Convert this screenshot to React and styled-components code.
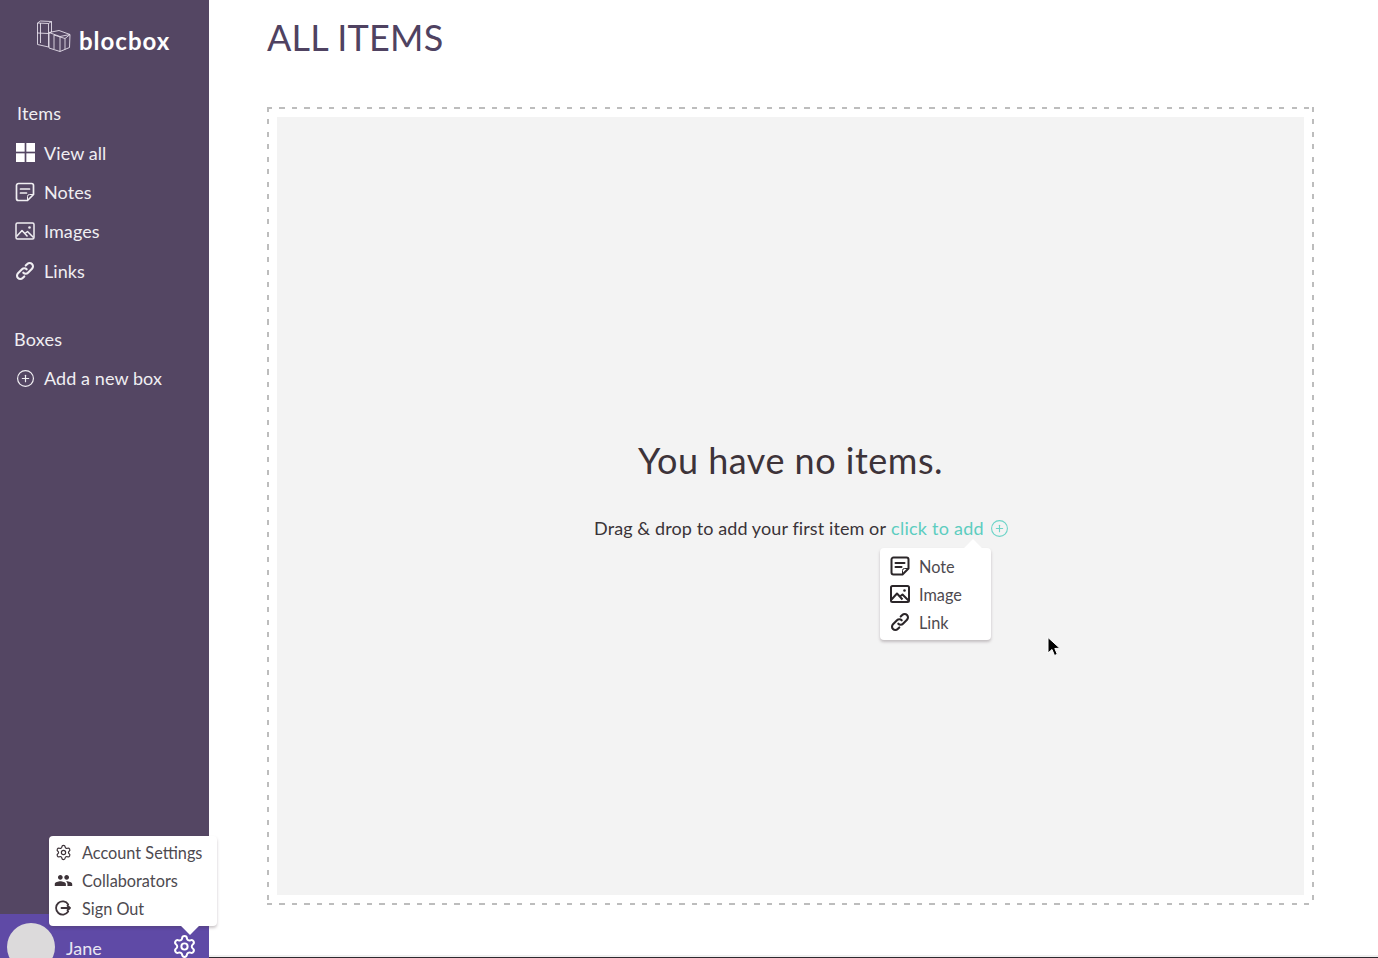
import React from "react";
import styled, { createGlobalStyle } from "styled-components";
import { Settings, CirclePlus } from "lucide-react";
import { MdPeople } from "react-icons/md";

const GlobalStyle = createGlobalStyle`
  html, body {
    margin: 0;
    padding: 0;
    height: 958px;
    overflow: hidden;
    background: #fff;
    font-family: "Lato", "Open Sans", sans-serif;
  }
  * { box-sizing: border-box; }
`;

const Page = styled.div`
  position: relative;
  display: flex;
  width: 1378px;
  height: 958px;
  overflow: hidden;
`;

const Sidebar = styled.aside`
  position: relative;
  flex: 0 0 209px;
  display: flex;
  flex-direction: column;
  background: #544663;
  color: #f0eef2;
`;

const Brand = styled.div`
  display: flex;
  align-items: flex-end;
  gap: 7px;
  height: 53px;
  padding: 0 0 0 36px;
`;

const BrandName = styled.span`
  font-size: 24px;
  font-weight: 700;
  line-height: 28px;
  color: #fff;
  letter-spacing: 1px;
  margin-bottom: -2px;
`;

const Section = styled.div`
  display: flex;
  flex-direction: column;
  margin-top: ${(p) => p.$top}px;
`;

const SectionTitle = styled.div`
  height: 24px;
  margin-bottom: 8px;
  padding-left: ${(p) => p.$indent}px;
  font-size: 18px;
  line-height: 24px;
  letter-spacing: 0.2px;
`;

const NavRow = styled.div`
  display: flex;
  align-items: center;
  gap: 9px;
  height: 39.4px;
  padding-left: 15px;
  font-size: 18px;
  letter-spacing: 0.08px;
`;

const IconSlot = styled.span`
  display: flex;
  align-items: center;
  justify-content: center;
  width: 20px;
  height: 20px;
  color: ${(p) => p.$color || "inherit"};
`;

const UserBar = styled.div`
  position: absolute;
  left: 0;
  right: 0;
  bottom: 0;
  height: 44px;
  display: flex;
  align-items: flex-start;
  background: #5f4aa6;
  overflow: hidden;
`;

const Avatar = styled.div`
  flex: 0 0 48px;
  height: 48px;
  margin: 9px 0 0 7px;
  border-radius: 50%;
  background: #dcdadb;
`;

const UserName = styled.span`
  margin: 23px 0 0 11px;
  font-size: 18px;
  line-height: 22px;
  color: #e9e6f2;
`;

const GearWrap = styled.span`
  margin: 20px 0 0 auto;
  padding-right: 12px;
  color: #fff;
  display: flex;
`;

const Popover = styled.div`
  position: absolute;
  z-index: 3;
  display: flex;
  flex-direction: column;
  justify-content: center;
  left: ${(p) => p.$left}px;
  top: ${(p) => p.$top}px;
  width: ${(p) => p.$width}px;
  height: ${(p) => p.$height}px;
  padding-bottom: ${(p) => (p.$arrowUp ? 0 : 2)}px;
  background: #fff;
  border-radius: 4px;
  box-shadow: 0 2px 3px rgba(70, 50, 60, 0.28);
  &::after {
    content: "";
    position: absolute;
    left: ${(p) => p.$arrow}px;
    width: 14px;
    height: 14px;
    background: #fff;
    transform: rotate(45deg);
    ${(p) => (p.$arrowUp ? "top: -6px;" : "bottom: -6px;")}
  }
`;

const PopRow = styled.div`
  display: flex;
  align-items: center;
  height: 28px;
  gap: ${(p) => p.$gap}px;
  padding-left: ${(p) => p.$pad}px;
  font-size: 16.3px;
  color: #4e4a50;
`;

const Main = styled.main`
  flex: 1;
  display: flex;
  flex-direction: column;
  padding: 0 65px 0 58px;
  border-bottom: 1px solid #2f2a30;
  box-shadow: inset 0 -2px 0 #f0f0f0;
`;

const Title = styled.h1`
  margin: 0;
  height: 107px;
  padding-top: 14px;
  font-size: 36px;
  line-height: 46px;
  font-weight: 400;
  letter-spacing: 0.2px;
  color: #4f4261;
`;

const dash = "#bdbdbd 0 5px, transparent 5px 12.5px";

const DropZone = styled.div`
  display: flex;
  width: 1047px;
  height: 798px;
  padding: 10px;
  background:
    repeating-linear-gradient(90deg, ${dash}) top / 100% 2px no-repeat,
    repeating-linear-gradient(90deg, ${dash}) bottom / 100% 2px no-repeat,
    repeating-linear-gradient(180deg, ${dash}) left / 2px 100% no-repeat,
    repeating-linear-gradient(180deg, ${dash}) right / 2px 100% no-repeat;
`;

const DropInner = styled.div`
  flex: 1;
  display: flex;
  flex-direction: column;
  align-items: center;
  padding-top: 320px;
  background: #f3f3f3;
`;

const Empty = styled.div`
  font-size: 36px;
  line-height: 46px;
  letter-spacing: 0.5px;
  color: #3d3339;
`;

const Hint = styled.div`
  display: flex;
  align-items: center;
  margin-top: 33px;
  padding-left: 22px;
  font-size: 18px;
  line-height: 24px;
  letter-spacing: 0.1px;
  color: #3a3338;
`;

const AddLink = styled.span`
  margin-left: 5px;
  color: #5dcdc0;
  letter-spacing: 0.25px;
`;

const AddIcon = styled.span`
  display: flex;
  margin-left: 6px;
  color: #6ed4c8;
`;

const Cursor = styled.svg`
  position: absolute;
  left: 1046px;
  top: 636px;
  z-index: 4;
`;

const NoteIcon = ({ size = 20, weight = 1.7 }) => (
  <svg width={size} height={size} viewBox="0 0 20 20" fill="none" stroke="currentColor" strokeWidth={weight} strokeLinejoin="round" strokeLinecap="round">
    <path d="M3.500 1.500h13a2 2 0 0 1 2 2v9l-6 6h-9a2 2 0 0 1-2-2v-13a2 2 0 0 1 2-2z" />
    <path d="M5.500 7h9M5.500 11h6" />
    <path d="M12.500 18.500v-4a2 2 0 0 1 2-2h4" strokeWidth="1" />
  </svg>
);

const ImageIcon = ({ size = 20, weight = 1.5 }) => (
  <svg width={size} height={size} viewBox="0 0 20 20" fill="none" stroke="currentColor" strokeWidth={weight} strokeLinejoin="round">
    <rect x="1" y="2" width="18" height="16" rx="1.500" />
    <path d="M1.500 15.500l5.500-6 5.500 6M10 12.500l2.500-2 6 6" />
    <circle cx="14.500" cy="6.500" r="1.300" fill="currentColor" stroke="none" />
  </svg>
);

const ChainIcon = ({ size = 20 }) => (
  <svg width={size} height={size} viewBox="0 0 20 20" fill="none" stroke="currentColor" strokeWidth="2.100" strokeLinecap="round">
    <path d="M8.300 11.700a3.300 3.300 0 0 0 4.700 0l4-4a3.300 3.300 0 0 0-4.700-4.700l-1.600 1.600" />
    <path d="M11.700 8.300a3.300 3.300 0 0 0-4.700 0l-4 4a3.300 3.300 0 0 0 4.700 4.700l1.600-1.600" />
  </svg>
);

const GridIcon = () => (
  <svg width="19" height="19" viewBox="0 0 18 18" fill="#fff">
    <rect x="0" y="0" width="8.200" height="8.200" />
    <rect x="9.800" y="0" width="8.200" height="8.200" />
    <rect x="0" y="9.800" width="8.200" height="8.200" />
    <rect x="9.800" y="9.800" width="8.200" height="8.200" />
  </svg>
);

const SignOutIcon = () => (
  <svg width="16" height="16" viewBox="0 0 16 16" fill="none" stroke="currentColor" strokeWidth="1.800" strokeLinecap="round" strokeLinejoin="round">
    <path d="M13.200 4.400A6.600 6.600 0 1 0 13.200 11.600" />
    <path d="M6.500 8h8.500M12.500 5.800L15 8l-2.500 2.200" />
  </svg>
);

const Logo = () => (
  <svg width="36" height="34" viewBox="0 0 36 34" fill="none" stroke="#e4deea" strokeWidth="0.9" strokeLinejoin="round">
    <path d="M1.500 4l3-2 11 .5v10.500l-3 1.500-11-.5zM1.500 4l11 .5v9.500M12.500 4.500l3-2" />
    <path d="M1.500 13.500v12l11 2.500V14M4.500 4v20" />
    <path d="M13 13.500l10-2 11 4-.5 13-9.500 4-11-3.500zM13 13.500l11 4 10-2M24 17.500v15" />
    <path d="M18 16v14M18 16l11 3.500v11M29 19.500l5-4" />
  </svg>
);

const navItems = [
  { label: "View all", icon: <GridIcon /> },
  { label: "Notes", icon: <NoteIcon /> },
  { label: "Images", icon: <ImageIcon /> },
  { label: "Links", icon: <ChainIcon /> },
];

export default function App() {
  return (
    <Page>
      <GlobalStyle />
      <Sidebar>
        <Brand>
          <Logo />
          <BrandName>blocbox</BrandName>
        </Brand>
        <Section $top={48}>
          <SectionTitle $indent={17}>Items</SectionTitle>
          {navItems.map((item) => (
            <NavRow key={item.label}>
              <IconSlot>{item.icon}</IconSlot>
              {item.label}
            </NavRow>
          ))}
        </Section>
        <Section $top={36}>
          <SectionTitle $indent={14}>Boxes</SectionTitle>
          <NavRow>
            <IconSlot>
              <CirclePlus size={19} strokeWidth={1.5} />
            </IconSlot>
            Add a new box
          </NavRow>
        </Section>
        <UserBar>
          <Avatar />
          <UserName>Jane</UserName>
          <GearWrap>
            <Settings size={25} strokeWidth={1.9} />
          </GearWrap>
        </UserBar>
      </Sidebar>
      <Popover $left={49} $top={836} $width={168} $height={90} $arrow={134}>
        <PopRow $pad={4} $gap={9}>
          <IconSlot $color="#3d3339">
            <Settings size={17} strokeWidth={1.7} />
          </IconSlot>
          Account Settings
        </PopRow>
        <PopRow $pad={4} $gap={9}>
          <IconSlot $color="#3d3339">
            <MdPeople size={19} />
          </IconSlot>
          Collaborators
        </PopRow>
        <PopRow $pad={4} $gap={9}>
          <IconSlot $color="#3d3339">
            <SignOutIcon />
          </IconSlot>
          Sign Out
        </PopRow>
      </Popover>
      <Main>
        <Title>ALL ITEMS</Title>
        <DropZone>
          <DropInner>
            <Empty>You have no items.</Empty>
            <Hint>
              Drag &amp; drop to add your first item or
              <AddLink>click to add</AddLink>
              <AddIcon>
                <CirclePlus size={19} strokeWidth={1.4} />
              </AddIcon>
            </Hint>
          </DropInner>
        </DropZone>
      </Main>
      <Popover $left={880} $top={548} $width={111} $height={92} $arrow={86} $arrowUp>
        <PopRow $pad={10} $gap={9}>
          <IconSlot $color="#2b2629">
            <NoteIcon weight={2} />
          </IconSlot>
          Note
        </PopRow>
        <PopRow $pad={10} $gap={9}>
          <IconSlot $color="#2b2629">
            <ImageIcon weight={2} />
          </IconSlot>
          Image
        </PopRow>
        <PopRow $pad={10} $gap={9}>
          <IconSlot $color="#2b2629">
            <ChainIcon />
          </IconSlot>
          Link
        </PopRow>
      </Popover>
      <Cursor width="15" height="22" viewBox="0 0 15 22">
        <path d="M2 1.500v15.500l4-3.500 2.500 6 2.800-1.200-2.500-5.800 5-.3z" fill="#000" stroke="#fff" strokeWidth="1" />
      </Cursor>
    </Page>
  );
}
